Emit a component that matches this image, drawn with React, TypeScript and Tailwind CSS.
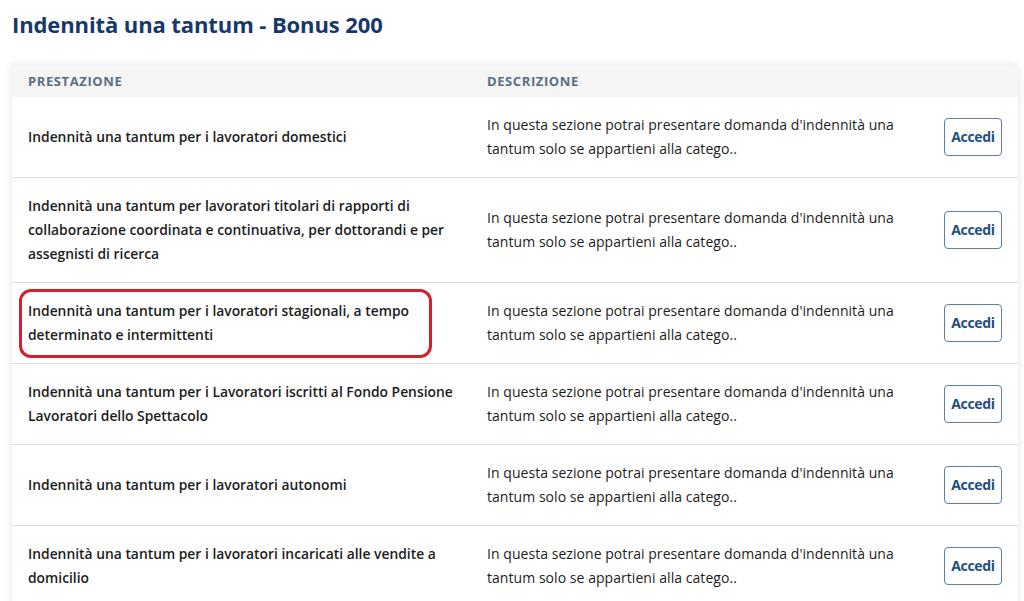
import React from "react";

interface Row {
  title: string[];
  highlighted?: boolean;
}

const DESC = ["In questa sezione potrai presentare domanda d'indennità una", "tantum solo se appartieni alla catego.."];

const ROWS: Row[] = [
  { title: ["Indennità una tantum per i lavoratori domestici"] },
  {
    title: [
      "Indennità una tantum per lavoratori titolari di rapporti di",
      "collaborazione coordinata e continuativa, per dottorandi e per",
      "assegnisti di ricerca",
    ],
  },
  {
    title: ["Indennità una tantum per i lavoratori stagionali, a tempo", "determinato e intermittenti"],
    highlighted: true,
  },
  { title: ["Indennità una tantum per i Lavoratori iscritti al Fondo Pensione", "Lavoratori dello Spettacolo"] },
  { title: ["Indennità una tantum per i lavoratori autonomi"] },
  { title: ["Indennità una tantum per i lavoratori incaricati alle vendite a", "domicilio"] },
];

export default function App() {
  return (
    <div className="min-h-screen bg-white pl-3 pt-[9px] font-['Open_Sans',sans-serif] overflow-hidden">
      <h1 className="text-[22px] font-bold text-[#17386a] leading-[30px] tracking-[-0.1px]">Indennità una tantum - Bonus 200</h1>

      <div className="mt-[26px] w-[1006px] bg-white shadow-[0_0_8px_rgba(0,0,0,0.12)]">
        {/* intestazione */}
        <div className="grid grid-cols-[459px_457px_1fr] bg-[#f5f5f5] h-8 items-center pt-[2px] text-[13px] font-bold text-[#5c6f82] uppercase tracking-[0.6px]">
          <div className="px-4">Prestazione</div>
          <div className="px-4">Descrizione</div>
          <div />
        </div>

        {ROWS.map((row, i) => (
          <div key={i} className="relative grid grid-cols-[459px_457px_1fr] items-center border-b border-[#dcdcdc] py-4 leading-6 text-[#1c1c1c]">
            <div className="px-4 font-semibold text-[13.85px] whitespace-nowrap">
              {row.title.map((line, j) => (
                <div key={j}>{line}</div>
              ))}
            </div>
            <div className="px-4 text-[14px] tracking-[0.05px] whitespace-nowrap">
              {DESC.map((line, j) => (
                <div key={j}>{line}</div>
              ))}
            </div>
            <div className="px-4 flex">
              <button className="h-[38px] w-[58px] rounded border border-[#5b7ea3] text-[14px] font-bold text-[#1f4e80] tracking-[-0.3px]">Accedi</button>
            </div>
            {row.highlighted && (
              <div className="absolute left-[7px] top-[6px] w-[413px] h-[69px] rounded-xl border-[3px] border-[#d4202c]" />
            )}
          </div>
        ))}
      </div>
    </div>
  );
}
